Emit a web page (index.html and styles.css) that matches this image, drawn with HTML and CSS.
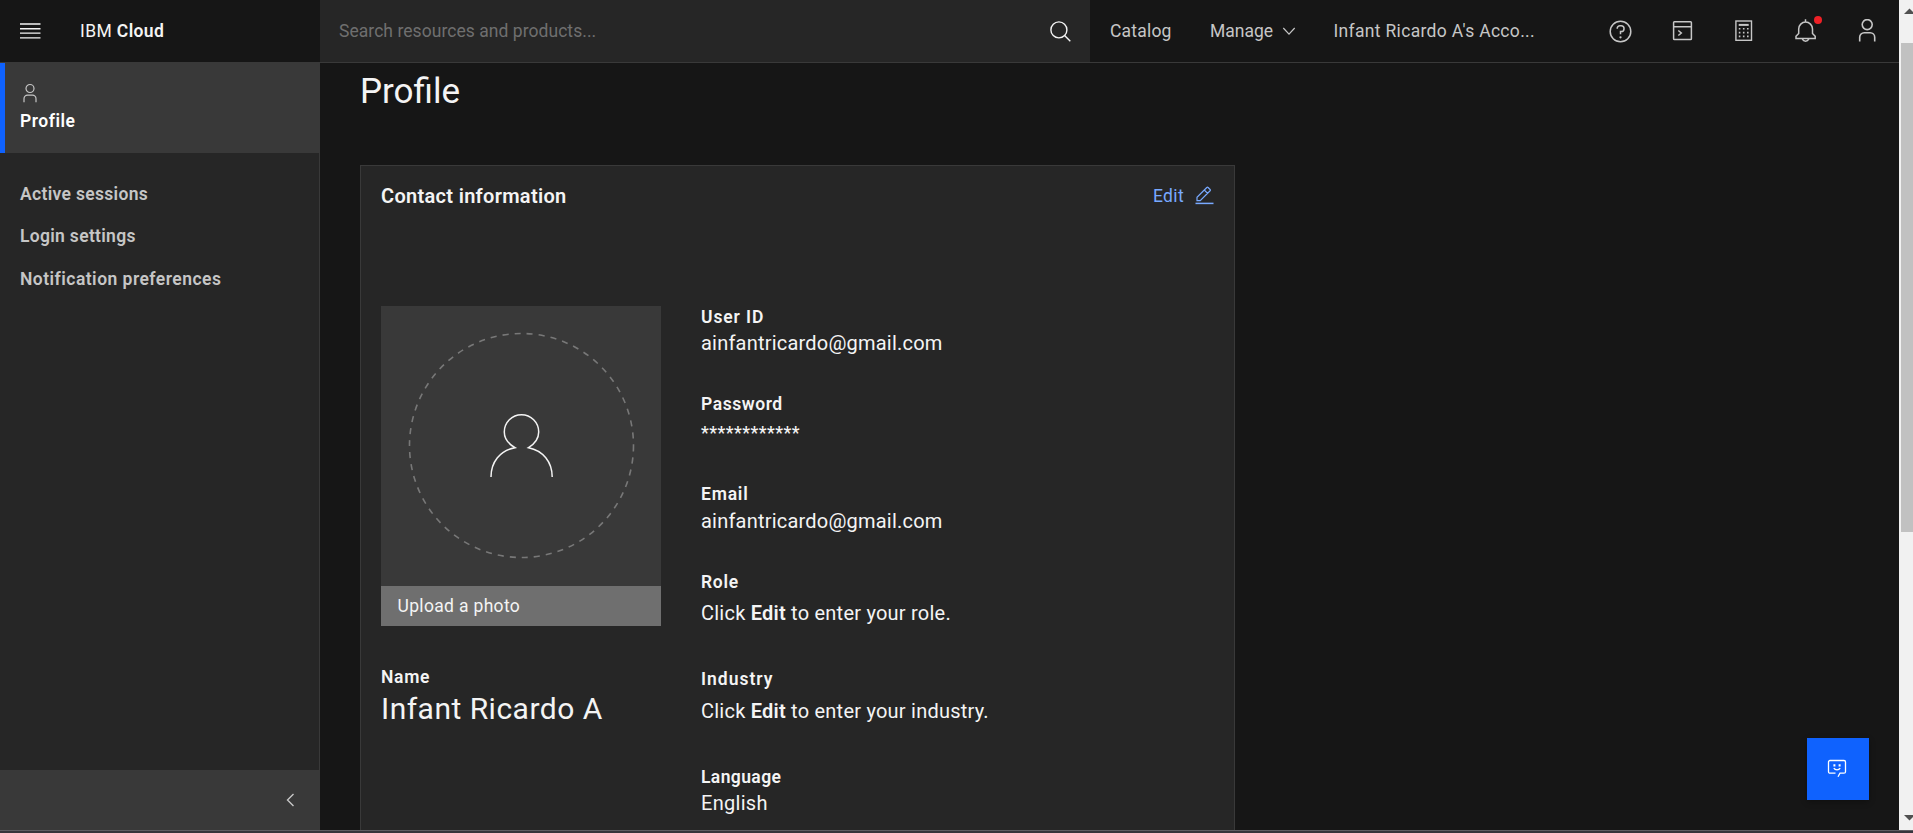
FILE: index.html
```html
<!DOCTYPE html>
<html lang="en">
<head>
<meta charset="utf-8">
<title>Profile - IBM Cloud</title>
<link rel="stylesheet" href="styles.css">
</head>
<body>
<div class="window">
  <div class="app">
    <header class="header">
      <div class="brand-area">
        <svg class="menu-icon" width="21" height="16" viewBox="0 0 21 16" fill="#f4f4f4"><path d="M0 .3h20.500v1.400H0zM0 5h20.500v1.400H0zM0 9.400h20.500v1.400H0zM0 14.200h20.500v1.400H0z"/></svg>
        <div class="brand">IBM <b>Cloud</b></div>
      </div>
      <div class="search">
        <span class="search-text">Search resources and products...</span>
        <svg class="search-icon" width="22" height="22" viewBox="0 0 22 22" fill="none" stroke="#f4f4f4" stroke-width="1.4"><circle cx="8.9" cy="8.9" r="8"/><path d="M14.600 14.600L20.300 20.300"/></svg>
      </div>
      <nav class="top-nav">
        <span class="nav-catalog">Catalog</span>
        <span class="nav-manage">Manage</span>
        <svg class="nav-chevron" width="14" height="9" viewBox="0 0 14 9" fill="none" stroke="#c6c6c6" stroke-width="1.2"><path d="M1.300 1L7 7.200L12.700 1"/></svg>
        <span class="nav-account">Infant Ricardo A's Acco...</span>
      </nav>
      <div class="actions">
        <div class="action"><svg width="25" height="25" viewBox="0 0 25 25" fill="none" stroke="#c6c6c6" stroke-width="1.500"><circle cx="12.500" cy="12.500" r="10.300"/><path d="M9.200 9.800v-.4a2.700 2.700 0 0 1 2.700-2.700h1.200a2.700 2.700 0 0 1 0 5.900h-.6v2.600"/><circle cx="12.500" cy="18.300" r="1.150" fill="#c6c6c6" stroke="none"/></svg></div>
        <div class="action"><svg width="25" height="25" viewBox="0 0 25 25" fill="none" stroke="#c6c6c6" stroke-width="1.500"><rect x="3.600" y="2.700" width="17.800" height="17.800" rx=".8"/><path d="M3.600 7.700H21.400M8.300 11.500l3 2.500-3 2.500"/></svg></div>
        <div class="action"><svg width="25" height="25" viewBox="0 0 25 25" fill="none" stroke="#c6c6c6" stroke-width="1.400"><rect x="4.900" y="2" width="15.600" height="19.300"/><path d="M7.700 5.900h10" stroke-width="2"/><path d="M7.800 9.800h10M7.800 13.600h10M7.800 17.400h10" stroke-width="1.600" stroke-dasharray="1.600 2.500"/></svg></div>
        <div class="action"><svg width="25" height="25" viewBox="0 0 25 25" fill="none" stroke="#c6c6c6" stroke-width="1.500"><path d="M12.500 .3v2.600M5.700 10a6.900 6.900 0 0 1 13.800 0v4.400l2.700 2.800v2.300H3v-2.300l2.700-2.800zM9.300 20.200c1.500 2.600 5 2.600 6.500 0"/></svg><i class="dot"></i></div>
        <div class="action"><svg width="26" height="25" viewBox="-.7 0 26 25" fill="none" stroke="#c6c6c6" stroke-width="1.600"><circle cx="12.500" cy="5.600" r="5"/><path d="M5 22.600v-4.400a4.500 4.500 0 0 1 4.500-4.500h6a4.500 4.500 0 0 1 4.500 4.500v4.400"/></svg></div>
      </div>
    </header>
    <div class="body">
      <aside class="sidebar">
        <div class="side-active">
          <svg class="side-user" width="20" height="20" viewBox="0 0 20 20" fill="none" stroke="#c6c6c6" stroke-width="1.200"><circle cx="10" cy="5.500" r="4"/><path d="M4 19.200v-3.500a3.600 3.600 0 0 1 3.600-3.600h4.800a3.600 3.600 0 0 1 3.600 3.600v3.500"/></svg>
          <span class="side-title">Profile</span>
        </div>
        <nav class="side-nav">
          <a class="s-active">Active sessions</a>
          <a class="s-login">Login settings</a>
          <a class="s-notif">Notification preferences</a>
        </nav>
        <div class="side-footer"><svg width="9" height="14" viewBox="0 0 9 14" fill="none" stroke="#c6c6c6" stroke-width="1.400"><path d="M7.500 1L1.500 7L7.500 13"/></svg></div>
      </aside>
      <main class="main">
        <h1>Profile</h1>
        <section class="card">
          <div class="card-head">
            <h2>Contact information</h2>
            <a class="edit"><span>Edit</span><svg width="19" height="19" viewBox="0 0 19 19" fill="none" stroke="#78a9ff" stroke-width="1.200"><path d="M.5 17.400H18.500" stroke-width="1.500"/><path d="M2 14.700v-3.400L11.800 1.500a.9.900 0 0 1 1.300 0l2 2a.9.900 0 0 1 0 1.300L5.200 14.700zM9.300 4l3.300 3.300"/></svg></a>
          </div>
          <div class="card-grid">
            <div class="col-photo">
              <div class="photo">
                <svg width="280" height="280" viewBox="0 0 280 280" fill="none"><circle cx="140.500" cy="139.500" r="112" stroke="#787878" stroke-width="1.600" stroke-dasharray="6.100 6"/><path d="M110 171c0-15 9-26.500 24-29.300C126 137 123.300 132 123.300 126a17.200 17.200 0 0 1 34.400 0c0 6-2.700 11-10.200 15.700C162 144.500 171.200 156 171.200 171" stroke="#f4f4f4" stroke-width="1.500"/></svg>
              </div>
              <div class="upload">Upload a photo</div>
              <div class="label l-name">Name</div>
              <div class="name">Infant Ricardo A</div>
            </div>
            <div class="col-fields">
              <div class="field f-user"><div class="label">User ID</div><div class="value">ainfantricardo@gmail.com</div></div>
              <div class="field f-pass"><div class="label">Password</div><div class="value stars">************</div></div>
              <div class="field f-email"><div class="label">Email</div><div class="value">ainfantricardo@gmail.com</div></div>
              <div class="field f-role"><div class="label">Role</div><div class="value hint">Click <b>Edit</b> to enter your role.</div></div>
              <div class="field f-ind"><div class="label">Industry</div><div class="value hint">Click <b>Edit</b> to enter your industry.</div></div>
              <div class="field f-lang"><div class="label">Language</div><div class="value english">English</div></div>
            </div>
          </div>
        </section>
      </main>
    </div>
    <button class="chat" aria-label="Chat"><svg width="20" height="20" viewBox="0 0 20 20" fill="none" stroke="#fff" stroke-width="1.300"><path d="M8.500 15.200H3A1.500 1.500 0 0 1 1.500 13.700V4A1.500 1.500 0 0 1 3 2.500H17A1.500 1.500 0 0 1 18.500 4V13.700A1.500 1.500 0 0 1 17 15.200H13L11 18.800M6.800 10.200c1.500 2.300 4.900 2.300 6.400 0"/><path d="M6.400 7.300h2M11.600 7.300h2" stroke-width="2.300"/></svg></button>
  </div>
  <div class="scrollbar">
    <svg class="arrow" width="14" height="8" viewBox="0 0 14 8"><path d="M5 7L10.500 1.500L16 7z" fill="#505050"/></svg>
    <div class="thumb"></div>
    <svg class="arrow" width="14" height="8" viewBox="0 0 14 8"><path d="M5 1L10.500 6.500L16 1z" fill="#505050"/></svg>
  </div>
</div>
<div class="strip"></div>
</body>
</html>
```
FILE: styles.css
```css
* { box-sizing: border-box; }
body {
  margin: 0;
  height: 833px;
  overflow: hidden;
  background: #161616;
  color: #f4f4f4;
  font-family: Roboto, "Liberation Sans", sans-serif;
  font-size: 17.5px;
  line-height: 24px;
}
svg { display: block; flex: none; }
b { font-weight: 600; }

.window { display: flex; height: 830px; }
.app { position: relative; width: 1899px; height: 830px; overflow: hidden; }
.strip { height: 3px; background: #36343c; border-top: 1px solid #5e5d63; }

/* Header */
.header {
  display: flex;
  height: 63px;
  border-bottom: 1px solid #393939;
  white-space: nowrap;
}
.brand-area { display: flex; width: 320px; padding-left: 20px; }
.menu-icon { margin-top: 23px; }
.brand { margin: 19px 0 0 39px; letter-spacing: .38px; }
.search {
  display: flex;
  justify-content: space-between;
  width: 770px;
  padding: 0 18px 0 19px;
  background: #262626;
}
.search-text { margin-top: 19px; color: #6f6f6f; letter-spacing: .05px; }
.search-icon { margin-top: 21px; }
.top-nav { display: flex; width: 500px; padding: 19px 0 0 20px; color: #c6c6c6; }
.nav-catalog { width: 100px; letter-spacing: .2px; }
.nav-manage { width: 71.500px; letter-spacing: 0; }
.nav-chevron { width: 14px; margin: 8px 38px 0 0; }
.nav-account { letter-spacing: .32px; }
.actions { display: flex; }
.action { position: relative; width: 61.6px; padding: 19px 0 0 18px; }
.dot {
  position: absolute;
  top: 16px;
  left: 39px;
  width: 8px;
  height: 8px;
  border-radius: 50%;
  background: #ee2026;
}

/* Sidebar */
.body { display: flex; height: 767px; }
.sidebar {
  display: flex;
  flex-direction: column;
  width: 320px;
  background: #262626;
  border-right: 1px solid #393939;
  font-weight: 600;
}
.side-active {
  height: 90px;
  padding: 20px 0 0 15px;
  border-left: 5px solid #0f62fe;
  background: #393939;
}
.side-user { margin-bottom: 6px; }
.side-title { color: #fff; letter-spacing: .5px; }
.side-nav { display: flex; flex-direction: column; padding: 29px 0 0 20px; color: #c6c6c6; }
.s-active { letter-spacing: .32px; }
.s-login { margin: 18px 0 19px; letter-spacing: .31px; }
.s-notif { letter-spacing: .47px; }
.side-footer { height: 60px; margin-top: auto; padding: 23px 0 0 285.500px; background: #393939; }

/* Main content */
.main { padding: 9px 0 0 40px; }
h1 { margin: 0 0 53px; font-size: 35px; font-weight: 400; line-height: 40px; letter-spacing: 0; }
.card {
  width: 875px;
  height: 700px;
  padding: 18px 20px 0;
  border: 1px solid #393939;
  background: #262626;
}
.card-head { display: flex; justify-content: space-between; height: 122px; }
h2 { margin: 0; font-size: 20px; font-weight: 600; line-height: 24px; letter-spacing: .31px; }
.edit { display: flex; gap: 11px; color: #78a9ff; letter-spacing: .35px; }
.edit svg { margin: 2px 0 0 0; }
.card-grid { display: flex; gap: 40px; }
.col-photo { width: 280px; }
.photo { height: 280px; background: #393939; }
.upload { height: 40px; padding: 8px 16.500px; background: #6f6f6f; letter-spacing: .33px; }
.label { font-weight: 600; }
.l-name { margin-top: 39px; letter-spacing: .7px; }
.name { font-size: 30px; line-height: 36px; margin-top: 2px; letter-spacing: .48px; }
.col-fields { margin-top: -1px; }
.field { display: flex; flex-direction: column; gap: 2px; }
.value { font-size: 20px; letter-spacing: .21px; }
.hint { letter-spacing: .23px; }
.f-user { height: 87px; }
.f-user .label { letter-spacing: .9px; }
.f-pass { height: 90px; }
.f-pass .label { letter-spacing: .55px; }
.value.stars { font-size: 17.5px; font-weight: 500; letter-spacing: .5px; padding-top: 3px; }
.f-email { height: 88px; gap: 3px; }
.f-email .label { letter-spacing: .8px; }
.f-role { height: 97px; gap: 7px; }
.f-role .label { letter-spacing: .7px; }
.f-ind { height: 98px; gap: 8px; }
.f-ind .label { letter-spacing: 1px; }
.f-lang .label { letter-spacing: .4px; }
.value.english { letter-spacing: .3px; }

/* Floating chat button */
.chat {
  position: absolute;
  left: 1807px;
  top: 738px;
  display: flex;
  align-items: center;
  justify-content: center;
  width: 62px;
  height: 62px;
  padding: 0 2px 2px 0;
  border: 0;
  background: #0f62fe;
  box-shadow: 0 2px 6px rgba(0, 0, 0, .3);
}

/* Page scrollbar */
.scrollbar { display: flex; flex-direction: column; width: 14px; padding: 7px 0 8px; background: #f1f1f1; }
.thumb { height: 489px; margin: 28px 0 auto 2px; background: #c1c1c1; }
```
